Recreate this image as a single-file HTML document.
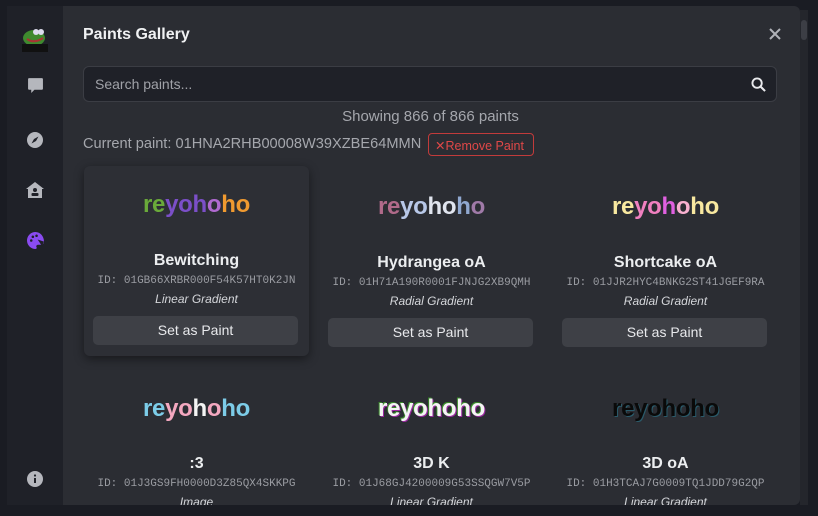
<!DOCTYPE html>
<html><head><style>
*{margin:0;padding:0;box-sizing:border-box}
body{width:818px;height:516px;background:#1a1c23;font-family:"Liberation Sans",sans-serif;position:relative;overflow:hidden;color:#e6e7ea}
.side{position:absolute;left:7px;top:6px;width:56px;height:499px;background:#1f2128}
.modal{position:absolute;left:63px;top:6px;width:737px;height:499px;background:#2b2d33;border-radius:0 6px 6px 0;overflow:hidden}
.sb{position:absolute;left:800px;top:10px;width:8px;height:495px;background:#24262c}
.sb i{position:absolute;left:1px;top:10px;width:6px;height:20px;border-radius:3px;background:#3c3e45}
.ic{position:absolute;left:26px}
h1{position:absolute;left:20px;top:20px;font-size:16px;font-weight:bold;color:#f0f1f3}
.search{position:absolute;left:20px;top:60px;width:694px;height:36px;background:#1f2128;border:1px solid #3b3d44;border-radius:6px;font-size:14px;color:#a0a2a8;padding:9px 11px}
.show{position:absolute;left:0;width:735px;top:102px;text-align:center;font-size:15px;color:#a5a7ad}
.cur{position:absolute;left:20px;top:130px;font-size:14.6px;color:#a5a7ad;white-space:nowrap}
.rm{position:absolute;left:365px;top:127px;width:106px;height:23px;border:1px solid #c23b3b;border-radius:4px;color:#e04848;font-size:12.5px;padding:4px 0 0 6px;white-space:nowrap}
.card{position:absolute;width:225px;height:190px;text-align:center}
.card.r2{height:140px}
.card.h{background:#2d2f35;box-shadow:0 3px 10px rgba(0,0,0,.45);border-radius:6px}
.p{position:absolute;left:0;width:100%;font-size:24px;font-weight:bold;letter-spacing:-0.3px}
.n{position:absolute;left:0;width:100%;font-size:16px;font-weight:bold;color:#eceef0}
.id{position:absolute;left:0;width:100%;font-family:"Liberation Mono",monospace;font-size:11px;color:#9a9ca2;white-space:nowrap}
.t{position:absolute;left:0;width:100%;font-size:12px;font-style:italic;color:#d4d6da}
.b{position:absolute;left:9px;width:205px;height:29px;background:#3e4046;border-radius:5px;font-size:14px;color:#e8e9ec;padding-top:6px}
</style></head><body>
<div class="side">
 <svg class="ic" style="left:14px;top:20px" width="28" height="26" viewBox="0 0 28 26"><ellipse cx="13" cy="12" rx="11" ry="8" fill="#3f8a2e"/><circle cx="15" cy="6" r="3" fill="#dde"/><circle cx="20" cy="6" r="3" fill="#dde"/><path d="M6 13 Q13 18 22 12" stroke="#a33" stroke-width="2" fill="none"/><rect x="1" y="18" width="26" height="8" fill="#111"/></svg>
 <svg class="ic" style="left:20px;top:71px" width="17" height="17" viewBox="0 0 16 16"><path d="M2 1h12a1 1 0 0 1 1 1v9a1 1 0 0 1-1 1H7l-3 3v-3H2a1 1 0 0 1-1-1V2a1 1 0 0 1 1-1z" fill="#b5b7bd"/></svg>
 <svg class="ic" style="left:20px;top:126px" width="16" height="16" viewBox="0 0 16 16"><circle cx="8" cy="8" r="8" fill="#b5b7bd"/><path d="M11.5 4.5 9 9 4.5 11.5 7 7z" fill="#1f2128"/></svg>
 <svg class="ic" style="left:19px;top:176px" width="18" height="16" viewBox="0 0 18 16"><path d="M9 0 18 7h-2v9H2V7H0z" fill="#b5b7bd"/><circle cx="9" cy="8" r="2" fill="#1f2128"/><rect x="5.5" y="11" width="7" height="3" rx="1" fill="#1f2128"/></svg>
 <svg class="ic" style="left:20px;top:226px" width="17" height="17" viewBox="0 0 16 16"><path d="M8 0a8 8 0 1 0 0 16c1 0 1.5-.8 1-1.6-.6-1 0-2.4 1.3-2.4H13a3 3 0 0 0 3-3C16 4 12.4 0 8 0z" fill="#8a4bf0"/><circle cx="4" cy="8" r="1.2" fill="#1f2128"/><circle cx="5.5" cy="4.5" r="1.2" fill="#1f2128"/><circle cx="9" cy="3.5" r="1.2" fill="#1f2128"/><path d="M16 9 10 7 14 13z" fill="#1f2128"/></svg>
 <svg class="ic" style="left:20px;top:465px" width="16" height="16" viewBox="0 0 16 16"><circle cx="8" cy="8" r="8" fill="#b5b7bd"/><rect x="7" y="7" width="2" height="5" fill="#1f2128"/><circle cx="8" cy="4.5" r="1.1" fill="#1f2128"/></svg>
</div>
<div class="modal">
 <h1>Paints Gallery</h1>
 <svg style="position:absolute;left:706px;top:22px" width="12" height="12" viewBox="0 0 12 12"><path d="M1 1 11 11M11 1 1 11" stroke="#b0b2b8" stroke-width="2"/></svg>
 <div class="search">Search paints...
  <svg style="position:absolute;right:10px;top:10px" width="15" height="15" viewBox="0 0 16 16"><circle cx="6.5" cy="6.5" r="5" stroke="#e8e9ec" stroke-width="2" fill="none"/><path d="M10.5 10.5 15 15" stroke="#e8e9ec" stroke-width="2.2"/></svg></div>
 <div class="show">Showing 866 of 866 paints</div>
 <div class="cur">Current paint: 01HNA2RHB00008W39XZBE64MMN</div>
 <div class="rm">✕Remove Paint</div>

 <div class="card h" style="left:21px;top:160px">
  <div class="p" style="top:25px"><span style="color:#6aaa3a">re</span><span style="color:#7b4fc8">yoh</span><span style="color:#b06ad0">o</span><span style="color:#f09a30">ho</span></div>
  <div class="n" style="top:86px">Bewitching</div>
  <div class="id" style="top:109px">ID: 01GB66XRBR000F54K57HT0K2JN</div>
  <div class="t" style="top:126px">Linear Gradient</div>
  <div class="b" style="top:150px">Set as Paint</div>
 </div>
 <div class="card" style="left:256px;top:162px">
  <div class="p" style="top:25px"><span style="color:#b06a8a">re</span><span style="color:#b8c8e8">yo</span><span style="color:#e0e4ee">ho</span><span style="color:#90a8d0">h</span><span style="color:#a07aa8">o</span></div>
  <div class="n" style="top:86px">Hydrangea oA</div>
  <div class="id" style="top:109px">ID: 01H71A190R0001FJNJG2XB9QMH</div>
  <div class="t" style="top:126px">Radial Gradient</div>
  <div class="b" style="top:150px">Set as Paint</div>
 </div>
 <div class="card" style="left:490px;top:162px">
  <div class="p" style="top:25px"><span style="color:#f8e8a0">re</span><span style="color:#f080c0">yo</span><span style="color:#e060e0">h</span><span style="color:#f8b0d0">o</span><span style="color:#f8e8a0">ho</span></div>
  <div class="n" style="top:86px">Shortcake oA</div>
  <div class="id" style="top:109px">ID: 01JJR2HYC4BNKG2ST41JGEF9RA</div>
  <div class="t" style="top:126px">Radial Gradient</div>
  <div class="b" style="top:150px">Set as Paint</div>
 </div>

 <div class="card r2" style="left:21px;top:364px">
  <div class="p" style="top:25px"><span style="color:#7ccce8">re</span><span style="color:#f4a8c0">yo</span><span style="color:#f4f4f4">h</span><span style="color:#f4a8c0">o</span><span style="color:#7ccce8">ho</span></div>
  <div class="n" style="top:85px">:3</div>
  <div class="id" style="top:108px">ID: 01J3GS9FH0000D3Z85QX4SKKPG</div>
  <div class="t" style="top:125px">Image</div>
 </div>
 <div class="card r2" style="left:256px;top:364px">
  <div class="p" style="top:25px;color:#f4f4f4;text-shadow:-1px -1px 0 #3a8a2a,1px 1px 0 #9a2aa0">reyohoho</div>
  <div class="n" style="top:85px">3D K</div>
  <div class="id" style="top:108px">ID: 01J68GJ4200009G53SSQGW7V5P</div>
  <div class="t" style="top:125px">Linear Gradient</div>
 </div>
 <div class="card r2" style="left:490px;top:364px">
  <div class="p" style="top:25px;color:#0a0a0a;text-shadow:1px 1px 0 #2a5a6a">reyohoho</div>
  <div class="n" style="top:85px">3D oA</div>
  <div class="id" style="top:108px">ID: 01H3TCAJ7G0009TQ1JDD79G2QP</div>
  <div class="t" style="top:125px">Linear Gradient</div>
 </div>
</div>
<div class="sb"><i></i></div>
</body></html>
